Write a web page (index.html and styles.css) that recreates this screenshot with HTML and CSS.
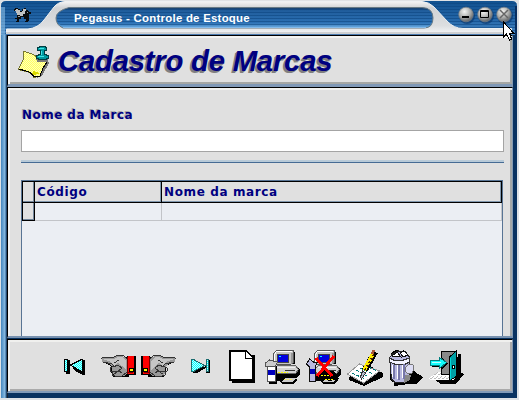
FILE: index.html
```
<!DOCTYPE html>
<html lang="pt-BR">
<head>
<meta charset="utf-8">
<title>Pegasus - Controle de Estoque</title>
<link rel="stylesheet" href="styles.css">
</head>
<body>
<main class="window">
  <header class="titlebar">
    <svg class="title-art" width="519" height="35" viewBox="0 0 519 35" aria-hidden="true">
      <defs>
        <linearGradient id="sky" x1="0" y1="0" x2="0" y2="1"><stop offset="0" stop-color="#11518f"/><stop offset=".55" stop-color="#2466a8"/><stop offset="1" stop-color="#4d8dc8"/></linearGradient>
        <linearGradient id="rim" x1="0" y1="0" x2="0" y2="1"><stop offset="0" stop-color="#f4f4f4"/><stop offset=".2" stop-color="#d0d2d4"/><stop offset=".75" stop-color="#dcdee0"/><stop offset="1" stop-color="#f2f4f6"/></linearGradient>
        <linearGradient id="capsule" x1="0" y1="0" x2="0" y2="1"><stop offset="0" stop-color="#153760"/><stop offset=".15" stop-color="#205d9c"/><stop offset=".75" stop-color="#2b70b4"/><stop offset="1" stop-color="#70b0e5"/></linearGradient>
        <pattern id="lines" width="4" height="3" patternUnits="userSpaceOnUse"><path d="M0 .5h4" stroke="#0b437e" stroke-opacity=".55"/></pattern>
        <radialGradient id="ball" cx=".4" cy=".3" r=".7"><stop offset="0" stop-color="#f5f5f3"/><stop offset=".55" stop-color="#b1b2b0"/><stop offset="1" stop-color="#626568"/></radialGradient>
      </defs>
      <path fill="#dfe2e5" d="M0 0h519v35H0z"/>
      <path fill="url(#sky)" d="M1 35V6Q1 1 6 1h506q5 0 5 5v29z"/>
      <path fill="url(#lines)" d="M1 35V6Q1 1 6 1h506q5 0 5 5v29z"/>
      <path fill="#81b5df" d="M1 7h2v28H1zM3 7h2v28H3z" opacity=".65"/>
      <path fill="#082f61" d="M515 6h2v29h-2z"/>
      <path fill="url(#rim)" stroke="#edf0f2" d="M6.500 33.500V29H28Q38 28 44 20L54 7Q58 2 65 1.500H422Q429 2 434 7L447 21Q454 28.500 463 28.500H511.500v5z"/>
      <path fill="#ced0d2" d="M6 32h505v2H6z"/><path fill="#4979ae" d="M6 34h505v1H6z"/>
      <path fill="url(#capsule)" stroke="#667984" d="M69 7.500H422Q433 8 433 18T424 28H63Q56 25 56 18T69 7.500z"/>
      <path fill="url(#lines)" d="M69 8H422Q432 8 432 18T424 26H63Q57 24 57 18T69 8z"/>
      <path fill="#83b9e9" d="M63 27h363v1H63z"/>
      <g shape-rendering="crispEdges"><path fill="#090b0d" d="M15 8h3v1h2v2h2V9h2V8h2v2h2v1h1v1h2v2h-2v3h-1v5h-3v-1h1v-2h-2v-2h-3v2h-2v3h-3v-1h1v-2h-2v-1h2v-3h1v-2h-2v-2h-2z"/><path fill="#bfc2c3" d="M16 9h2v1h2v2h2v-1h1V9h3v2h-1v3h-2v2h-3v-1h-3v-2h-1v-2h-1z"/><path fill="#090b0d" d="M26 11h2v1h2v2h-3v3h2v4h-2v-3h-2v-4h1z"/><path fill="#999" d="M27 12h1v1h-1zM18 16h2v1h-2z"/></g>
      <g fill="#0a376d" opacity=".65"><circle cx="467" cy="16" r="8"/><circle cx="486" cy="16" r="8"/><circle cx="505" cy="16" r="8"/></g>
      <g fill="url(#ball)" stroke="#777f87" stroke-width=".7"><circle cx="466" cy="14.500" r="7.300"/><circle cx="485" cy="14.500" r="7.300"/><circle cx="504" cy="14.500" r="7.300"/></g>
      <path fill="#000" d="M462 16h7v2h-7z"/><path fill="none" stroke="#000" d="M480.500 10.500h8v7h-8zM480 11.500h9"/><path fill="none" stroke="#666" stroke-width="1.500" d="m500 10 8 8m0-8-8 8"/>
    </svg>
    <span class="caption">Pegasus - Controle de Estoque</span>
  </header>

  <section class="client">
    <div class="banner">
      <svg class="note" width="36" height="34" viewBox="0 0 36 34" shape-rendering="crispEdges" aria-hidden="true">
        <defs><pattern id="paper" width="2" height="2" patternUnits="userSpaceOnUse"><path fill="#ffff64" d="M0 0h2v2H0z"/><path fill="#ffffb5" d="M0 0h1v1H0zM1 1h1v1H1z"/></pattern></defs>
        <path fill="#777" d="m30 16 1 2-7 13-5 2z"/><path fill="url(#paper)" stroke="#777733" d="M6 6.500 14 9l9 5 6 3-4 6-3 8-6 1.500q-3-5-8-6l-8-2 5-9z"/>
        <path fill="#d9d900" d="m14 31 1-5 7 2z"/><path fill="none" stroke="#000" d="m1 24 7 2q5 1 8 6l6-1 3-8 4-6"/>
        <path fill="#777" d="M18 12h12v5H19z"/><path fill="#009a9f" stroke="#003e42" d="M19.500 2.500h2v-1h6v1h1v3h-2v4h2v1h2v3h-2v1h-8v-1h-2v-3h2v-1h2v-4h-3z"/><path fill="#42e4e6" d="M21 3h5v1h-5zM23 6h1v4h-1zM20 11h6v1h-6z"/>
      </svg>
      <h1>Cadastro de Marcas</h1>
    </div>

    <div class="content">
      <label for="brand">Nome da Marca</label>
      <input id="brand" type="text">
      <hr>
      <div class="grid">
        <div class="row head"><span class="marker"></span><span class="code">Código</span><span class="name">Nome da marca</span></div>
        <div class="row"><span class="marker"></span><span class="code"></span><span class="name"></span></div>
      </div>
    </div>

    <nav class="toolbar">
      <svg viewBox="62 345 404 46" width="404" height="46" shape-rendering="crispEdges" aria-hidden="true">
        <defs>
          <pattern id="cyan" width="2" height="2" patternUnits="userSpaceOnUse"><path fill="#00ffff" d="M0 0h2v2H0z"/><path fill="#bfffff" d="M0 0h1v1H0zM1 1h1v1H1z"/></pattern>
          <pattern id="tiles" width="4" height="4" patternUnits="userSpaceOnUse"><path fill="#fff" d="M0 0h4v4H0z"/><path stroke="#bbb" d="m0 2.500 2-1M2 4l2-1"/></pattern>
          <g id="hand">
            <path fill="#000" d="M102 361h10v-3h15v-1h9v19h-7v2h-16v-4h-2v-7l-8-4z"/>
            <path fill="#999" d="M102 359h10l3-2h7l6 3v14l-4 3h-9l-3-3v-6l-3-3-7-2z"/>
            <path fill="#c5c5c5" d="M103 360h11l4-2h4l4 4v9l-4-4-4-3-4 3-3-4z"/>
            <path fill="none" stroke="#333" d="m101.500 360 1-1.500h10l5-2h6l4 4M103 363l9 2 2 2-4 2v3l2 1v3l3 1h7l5-4M114 364l5-3M113 368l5-2 4 3-5 4-5-1M114 375l5-3 3 2"/>
            <path fill="#f00" d="M128 357h6v18h-6z"/><path fill="#760000" d="M127 358h1v17h-1zM128 373h5v1h-5z"/><path fill="#000" d="M129 369h5v4h-5z"/><path fill="#ffff00" d="M130 370h3v2h-3z"/>
          </g>
          <g id="computer">
            <path fill="#000" d="M293 353h2v12h-2zM278 366h18l4 5v5l-4 3 1 2-3 4h-11l-4-3h-4v-5l-3-5z"/>
            <path fill="#c6c6c6" stroke="#555" d="m273.500 354.500 3-3h17v12l-3 2h-17z"/><path fill="#fff" d="M276 352h16v1h-16v2h-1v-2h1zM274 355h1v10h-1z"/><path fill="#999" d="M291 354h2v9l-2 2z"/><path fill="#444" d="M277 355h12v9h-12z"/><path fill="#0000df" d="M278 356h10v7h-10z"/><path fill="#0ff" d="M279 357h2v1h-2z"/>
            <path fill="#d2d2d2" stroke="#666" d="m273.500 370.500 4-4h18l3 4-3 4h-20z"/><path fill="#eee" d="M277 368h18v1h-18z"/><path fill="#333" d="M285 371h10v1h-10z"/><path stroke="#ffff00" stroke-dasharray="2 1" d="M278 373.500h10"/>
            <path fill="#ccc" d="m281 383 4-4h11l-4 4z"/><path stroke="#f7eb6f" stroke-dasharray="2 1" d="M284 380.500h9"/>
          </g>
        </defs>
        <g><path fill="#000" d="M66 361h4v14h-4zM71 366l12-5h2v15h-2l-8-4z"/><path fill="url(#cyan)" stroke="#000" d="M64.500 360.500h3v12h-3zM70.500 366l11-5.500h1v12h-1z"/></g>
        <use href="#hand"/><use href="#hand" transform="matrix(-1 0 0 1 277 0)"/>
        <g><path fill="#000" d="M193 363h3l9 5 2-7h3v13h-4v-5l-9 5h-4z"/><path fill="url(#cyan)" stroke="#196b6e" d="M191.500 360.500h2l11 6-11 6h-2zM206.500 360.500h2v12h-2z"/></g>
        <g><path fill="#000" d="M232 356h23v28h-23z"/><path fill="#e0e0e0" d="M249 352h6v4h-2z"/><path fill="#fff" stroke="#000" stroke-width="2" d="M230 352h16l7 7v22h-23z"/><path fill="#fff" stroke="#000" d="M245.500 352v7.500h8"/></g>
        <use href="#computer"/>
        <g><path fill="#000" d="M269 367h8v18h-8z"/><path fill="#ccc" stroke="#555" d="m265.500 364 4-3 3 1 5 1-2 4-10 1z"/><path fill="#fff" stroke="#555" d="M267.500 367.500h8v15h-8z"/><path fill="#0000bd" d="M268 371h7v5h-7z"/></g>
        <g transform="translate(41 0)"><use href="#computer"/><path fill="#000" d="m279 371 14 1 5 8-10 2-12-4z"/><path stroke="#ffff00" stroke-dasharray="2 1" d="M280 376.500h9M284 380.500h8"/><path fill="#b9b9df" stroke="#111" d="m265.500 365 3-5 4 3h4l-2 4v15h-6v-14z"/><path fill="#0000bd" d="M269 370h5v5h-5z"/><path fill="none" stroke="#f00" stroke-width="3" d="m275 359 16 18m-15 0 17-20"/></g>
        <g><path fill="#000" d="m350 376 16-11 17 9v4l-19 9-15-6z"/><path fill="#fff" stroke="#999" d="m347.500 375 12-10 20 7-16 12z"/><path fill="none" stroke="#007a7a" stroke-dasharray="3 2" d="m352 374 13 6m-9-9 13 7m-9-9 13 6m-9-9 13 6"/><path stroke="#000" stroke-width="6" d="m365 371 10-18"/><path stroke="#ffec00" stroke-width="4" d="m364 371 9-16"/><path stroke="#ad5738" stroke-width="3" d="m372 355 2-4"/><path stroke="#502000" stroke-width="2" stroke-dasharray="2 2" d="m365 371 9-16"/><path fill="#b3bfd1" stroke="#333" d="m362.500 372 3 2-4 6-1-2z"/></g>
        <g><path fill="#000" d="m412 365 3 8 8 5-7 7h-20l-6-4v-18z"/><path fill="#000" d="m391 354 5-3 5 1 3-1 6 8-2 26-14 2z"/><path fill="#b8b8df" stroke="#222" d="m389.500 359 3-4 6-3 7 1 4 5v18l-4 7h-11l-3-3z"/><path fill="#f3f3ff" stroke="#333" d="m389.500 359 4 2h10l6-2v4l-4 2h-11l-5-2z"/><path fill="#fff" stroke="#111" d="m392 357 5-4 4 5zM400 354l4-2 4 4-5 2z"/><path fill="none" stroke="#7777aa" stroke-width="2" d="M394 366v14m5-14v15m5-16v15"/><path stroke="#fff" d="M392 366v12m5-12v14m5-14v13"/><path fill="#ddddf4" stroke="#777" d="m406 368 3-3 4 1 1 4-2 4-4 1-3-3z"/><path fill="#888" d="M405 376h6l-1 5-6 3z"/></g>
        <g><path fill="#000" d="m434 380 7-6h21l2 1-8 10h-15z"/><path fill="url(#tiles)" d="m429 379 9-6h14l8 3-7 5h-23z"/><path fill="#888" stroke="#000" d="M441.500 352.500h15v23h-15z"/><path fill="#000" d="M458 355h3v20l-6 8v-7z"/><path fill="#009fa5" stroke="#000" d="m449.500 358 7-6v25l-7 5z"/><path fill="#00d9db" d="M450 359h1v21h-1z"/><path fill="#fff" stroke="#000" d="M452 366h2v3h-2z"/><path fill="#000" d="M431 368h10v3l7-7-6-5v3z"/><path fill="#1ff" stroke="#008080" d="M430.500 361.500h9v-3l7 5-7 6v-3h-9z"/><path fill="#bff" d="M432 363h9v1h-9z"/></g>
      </svg>
    </nav>
  </section>
  <svg class="cursor" width="12" height="21" viewBox="0 0 12 21" shape-rendering="crispEdges" aria-hidden="true"><path fill="#fff" stroke="#000" d="M.5 1v15l3-3 3 6 2-1-2-6h4z"/></svg>
</main>
</body>
</html>
```
FILE: styles.css
```
* { box-sizing: border-box; }
body { margin: 0; background: #dfe3e6; overflow: hidden; }
.window {
  position: relative;
  display: flex;
  flex-direction: column;
  width: 519px;
  height: 400px;
  color: #000080;
  font-family: "DejaVu Sans", sans-serif;
}
.titlebar { position: relative; flex: 0 0 35px; padding: 10px 0 0 74px; }
.title-art { position: absolute; inset: 0; }
.caption {
  position: relative;
  display: block;
  color: #fff;
  font: bold 11.4px/16px "Liberation Sans", Arial, sans-serif;
  letter-spacing: .26px;
  white-space: nowrap;
}
.client {
  display: flex;
  flex-direction: column;
  width: 516px;
  height: 363px;
  margin-left: 1px;
  padding: 0 4px 5px 6px;
  background:
    linear-gradient(90deg, #4587be, #8abce2 4px, #2b5e91 5px, #111 7px, transparent 7px),
    linear-gradient(#093361, #093361);
}
.banner {
  display: flex;
  flex: 0 0 52px;
  gap: 3px;
  padding: 9px 0 0 10px;
  border-style: solid;
  border-width: 1px 1px 3px;
  border-color: #000 #839bb3 #8099b7 #000;
  background: #e0e0e0;
  box-shadow: inset 2px 2px #f4f4f2, inset -2px -2px #a5a7a5;
}
.note { flex: none; }
h1 {
  margin: -2px 0 0 1px;
  font: italic bold 29.4px/36px "Liberation Sans", Arial, sans-serif;
  text-shadow: -1px 1px #808080, -2px 2px #808080;
  letter-spacing: -.28px;
  white-space: nowrap;
}
.content {
  display: flex;
  flex-direction: column;
  flex: 0 0 251px;
  padding: 18px 7px 0 13px;
  border-style: solid;
  border-width: 1px 1px 2px;
  border-color: #000 #839bb3 #7891af #000;
  background: #e0e0e0;
  box-shadow: inset 2px 2px #f2f2f0, inset -2px 0 #a4a8a8;
}
label {
  height: 24px;
  padding-left: 1px;
  font: bold 12px/18px "DejaVu Sans", sans-serif;
  letter-spacing: .45px;
  text-shadow: -1px -1px #aaa;
}
input { width: 483px; height: 22px; margin: 0; padding: 2px 4px; border: 1px solid #a4a4a4; background: #fff; }
hr { width: 483px; height: 3px; margin: 8px 0 17px; border: 0; border-top: 2px solid #b8cad8; border-bottom: 1px solid #466b94; }
.grid { flex: 1; width: 482px; border: solid #587494; border-width: 1px 1px 0; background: #ebeef3; }
.row { display: flex; height: 18px; color: #000080; }
.row span { flex: none; border: solid #c2c4c8; border-width: 0 1px 1px 0; }
.row .marker { width: 13px; border: 1px solid #000; border-width: 0 1px 1px; background: #e0e0e0; box-shadow: inset -1px -1px #73869b; }
.row .code { width: 127px; }
.row .name { flex: 1; }
.head { height: 22px; border-top: 1px solid #000; background: #e0e0e0; font: bold 12px/20px "DejaVu Sans", sans-serif; }
.head .code, .head .name { padding-left: 2px; border-color: #000; box-shadow: inset -1px -1px #8198ae; letter-spacing: .62px; }
.toolbar {
  flex: 1;
  margin-top: 1px;
  padding: 4px 0 0 54px;
  border: 1px solid #000;
  border-width: 1px 1px 2px;
  border-color: #000 #8299b4 #829cba #000;
  background: #e0e0e0;
  box-shadow: inset 2px 2px #f0f0ee, inset -2px -2px #aaa;
}
.toolbar svg { display: block; }
.cursor { position: absolute; left: 503px; top: 21px; }
```
